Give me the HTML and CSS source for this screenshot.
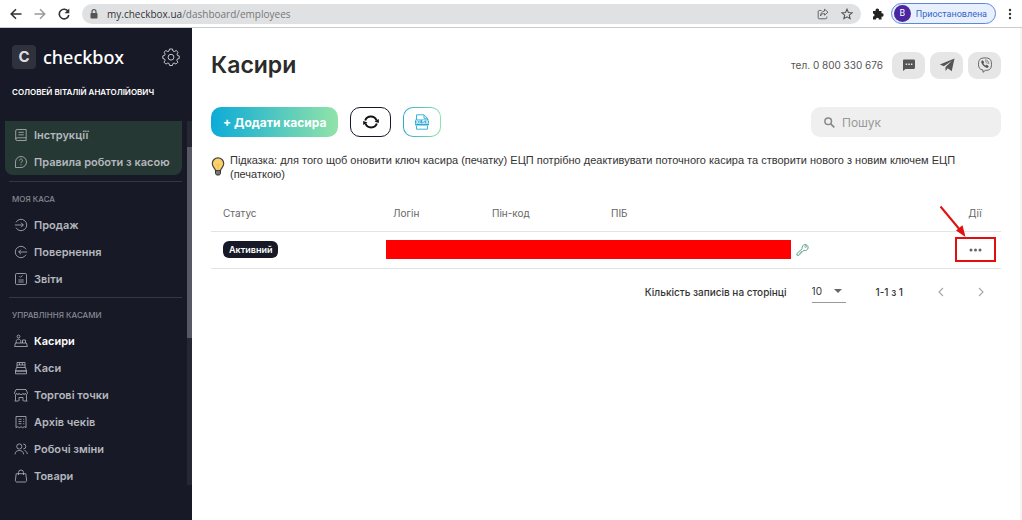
FILE: index.html
```html
<!DOCTYPE html>
<html lang="uk">
<head>
    <meta charset="UTF-8">
    <meta name="viewport" content="width=device-width, initial-scale=1.0">
    <title>Касири</title>
    <link rel="stylesheet" href="styles.css">
</head>
<body>

    <!-- Browser bar -->
    <header class="browser">
        <button class="nav-btn" aria-label="Back"><svg width="12" height="12" viewBox="0 0 12 12"><path d="M11.5 6H1.5M6 1.2L1.2 6 6 10.800" stroke="#333" stroke-width="1.6"/></svg></button>
        <button class="nav-btn" aria-label="Forward"><svg width="12" height="12" viewBox="0 0 12 12"><path d="M.5 6h10M6 1.200L10.800 6 6 10.800" stroke="#999" stroke-width="1.400"/></svg></button>
        <button class="nav-btn" aria-label="Reload"><svg width="12" height="12" viewBox="0 0 12 12"><path d="M10.200 3.600A4.800 4.800 0 1 0 10.800 7" stroke="#333" stroke-width="1.600"/><path d="M11.300.5v4.800H6.500z" fill="#333"/></svg></button>
        <div class="address">
            <svg width="8" height="10" viewBox="0 0 8 10"><rect x=".5" y="4" width="7" height="5.500" rx=".8" fill="#555"/><path d="M2 4V2.700a2 2 0 0 1 4 0V4" stroke="#555" stroke-width="1.200"/></svg>
            <span class="url"><b>my.checkbox.ua</b>/dashboard/employees</span>
            <svg width="12" height="12" viewBox="0 0 12 12"><path d="M4.500 2.500H2.200a1 1 0 0 0-1 1v6.300a1 1 0 0 0 1 1h6.600a1 1 0 0 0 1-1V8.500M7.500 1.200l3.500 3-3.500 3V5.500C5.500 5.500 4.300 6.300 3.500 8c.2-2.800 1.500-4.600 4-5z" stroke="#666"/></svg>
            <svg width="12" height="12" viewBox="0 0 12 12"><path d="M6 1.200l1.400 3.300 3.600.3-2.700 2.400.8 3.500L6 8.800l-3.100 1.900.8-3.500L1 4.800l3.600-.3z" stroke="#555" stroke-width="1.100"/></svg>
        </div>
        <svg class="puzzle" width="12" height="12" viewBox="0 0 12 12"><path d="M1 3h2.600a1.800 1.800 0 1 1 3.400 0H9.500v2.300a1.700 1.700 0 1 1 0 3.300V11.500H6.800a1.400 1.400 0 1 0-2.700 0H1V8.600a1.500 1.500 0 1 0 0-3z" fill="#222"/></svg>
        <button class="profile"><span class="avatar">В</span>Приостановлена</button>
        <button class="nav-btn" aria-label="Menu"><svg width="4" height="12" viewBox="0 0 4 12"><g fill="#333"><circle cx="2" cy="2" r="1.200"/><circle cx="2" cy="6" r="1.200"/><circle cx="2" cy="10" r="1.200"/></g></svg></button>
    </header>

    <div class="layout">
        <!-- Sidebar -->
        <aside class="sidebar">
            <div class="brand">
                <span class="brand-icon">C</span>
                <span class="brand-name">checkbox</span>
                <button class="settings" aria-label="Налаштування"><svg width="18" height="18" viewBox="0 0 18 18"><path d="M7.500 1h3l.5 2 1.300.6 1.900-1.100 1.900 1.900L15 6.200l.5 1.300 1.700.4v2.600l-1.800.5-.6 1.300 1.100 1.900-1.900 1.900-1.900-1.100-1.200.6-.5 1.900H7.600l-.5-1.900-1.300-.6-1.900 1.100L2 14.200l1.100-1.900L2.600 11 .8 10.500V7.900l1.800-.5.6-1.300L2 4.300l1.900-1.800 1.900 1.100L7 3z" stroke="#c4c6ca" stroke-linejoin="round"/><circle cx="9" cy="9.200" r="2.900" stroke="#c4c6ca"/></svg></button>
            </div>
            <div class="user-name">СОЛОВЕЙ ВІТАЛІЙ АНАТОЛІЙОВИЧ</div>

            <div class="menu-wrap">
                <nav class="menu">
                    <div class="help-box">
                        <a href="#"><svg width="14" height="14" viewBox="0 0 14 14"><path d="M3.200 1.500h9v11h-9a1.500 1.500 0 0 1-1.500-1.500V3a1.500 1.500 0 0 1 1.500-1.500zM1.700 11a1.400 1.400 0 0 1 1.500-1.200h9M4.500 4.300h5.300M4.500 6.800h5.300"/></svg>Інструкції</a>
                        <a href="#"><svg width="14" height="14" viewBox="0 0 14 14"><path d="M1.500 12.500V7A5.500 5.500 0 1 1 7 12.500zM5.500 5.500a1.500 1.500 0 1 1 2.300 1.300c-.6.400-.8.600-.8 1.300M7 9.300v1"/></svg>Правила роботи з касою</a>
                    </div>

                    <div class="menu-group">
                        <h2>МОЯ КАСА</h2>
                        <a href="#"><svg width="14" height="14" viewBox="0 0 14 14"><path d="M2 4.300a5.700 5.700 0 1 1 0 5.400M.8 7h8.500M7 4.700L9.300 7 7 9.300"/></svg>Продаж</a>
                        <a href="#"><svg width="14" height="14" viewBox="0 0 14 14"><path d="M12 4.300a5.700 5.700 0 1 0 0 5.400M13.200 7H4.700M7 4.700L4.700 7 7 9.300"/></svg>Повернення</a>
                        <a href="#"><svg width="14" height="14" viewBox="0 0 14 14"><rect x="1.500" y="1.500" width="11" height="11" rx="1.200"/><path d="M5.500 4.300l1 1L8.500 3.300M4.300 8h5.400M4.300 10h5.400"/></svg>Звіти</a>
                    </div>

                    <div class="menu-group">
                        <h2>УПРАВЛІННЯ КАСАМИ</h2>
                        <a href="#" class="active"><svg width="14" height="14" viewBox="0 0 14 14"><circle cx="4.500" cy="2.500" r="1.400"/><path d="M2.200 9V7.500C2.200 6 3 5.200 4.500 5.200S6.800 6 6.800 7.500V9M8.500 9V6h3v3M1.500 9h11l.9 3.500H.6z"/></svg>Касири</a>
                        <a href="#"><svg width="14" height="14" viewBox="0 0 14 14"><path d="M3 6.500v-5h8v5M3 4h8M5.600 1.500V4M8.300 1.500V4M2.500 6.500h9l1 3.500h-11zM1.500 10h11v2.800h-11z"/></svg>Каси</a>
                        <a href="#"><svg width="14" height="14" viewBox="0 0 14 14"><path d="M2 1.500h10L13.500 5c0 1.800-2.100 2-2.200.3C11 7 9 7 9 5.300 8.800 7 5.200 7 5 5.300 5 7 3 7 2.700 5.300 2.500 7 .5 6.800.5 5zM1.500 6.800v6M12.500 6.800v6M.5 13h4M9.500 13h4M5 13V9.500h4V13"/></svg>Торгові точки</a>
                        <a href="#"><svg width="14" height="14" viewBox="0 0 14 14"><path d="M2 1.500h10v11.200l-1.700-1-1.600 1-1.700-1-1.600 1-1.700-1-1.700 1zM4.500 4.300h3M4.500 6.500h3M4.500 8.700h3M9.200 4.300h1M9.200 6.500h1M9.200 8.700h1"/></svg>Архів чеків</a>
                        <a href="#"><svg width="14" height="14" viewBox="0 0 14 14"><circle cx="5.300" cy="4.500" r="2.600"/><path d="M1 12.300c.2-2.500 1.700-3.800 4.300-3.800s4.100 1.300 4.300 3.800M9.300 2a2.500 2.500 0 0 1 0 5M10.500 8.500c1.700.5 2.600 1.700 2.800 3.500"/></svg>Робочі зміни</a>
                        <a href="#"><svg width="14" height="14" viewBox="0 0 14 14"><path d="M2.200 4.700h9.600l.8 6.500c.1 1-.5 1.800-1.500 1.800H2.900c-1 0-1.600-.8-1.500-1.800zM4.500 6V3.500a2.500 2.500 0 0 1 5 0V6"/></svg>Товари</a>
                    </div>
                </nav>
                <div class="scrollbar"><div class="thumb"></div></div>
            </div>
        </aside>

        <!-- Page content -->
        <main class="content">
            <div class="page-head">
                <h1>Касири</h1>
                <span class="phone">тел. 0 800 330 676</span>
                <button class="contact" aria-label="Чат"><svg width="14" height="14" viewBox="0 0 14 14"><path d="M2.200 1.500h9.600c.7 0 1.200.5 1.200 1.200v7c0 .7-.5 1.200-1.200 1.200H3.500L1 13V2.700c0-.7.5-1.200 1.200-1.200z" fill="#555"/><path d="M3.700 6.300h1.500M6.300 6.300h1.500M8.900 6.300h1.500" stroke="#e6e6e6" stroke-width="1.400"/></svg></button>
                <button class="contact" aria-label="Telegram"><svg width="16" height="14" viewBox="0 0 16 14"><path d="M15.500.5L.8 6.600l4 1.600L13 2.700 6.500 9v4l2.300-2.700 3.900 2.900z" fill="#555"/></svg></button>
                <button class="contact" aria-label="Viber"><svg width="16" height="16" viewBox="0 0 16 16"><path d="M8 .9c4.800 0 6.500 1.700 6.500 6.300s-1.700 6.200-6.200 6.200L6 15.300v-2.200c-3.300-.6-4.500-2.300-4.500-5.900C1.500 2.600 3.200.9 8 .9z" stroke="#666"/><path d="M4.800 3.700l1-.5 1.400 2-.8 1.200c.4 1 1.100 1.700 2.200 2.200l1.100-.9 2.100 1.500-.6 1.300c-.6.600-1.600.4-3.100-.5C6 8.700 4.700 7 4.200 5.200c-.1-.6.100-1.100.6-1.500z" fill="#555"/><path d="M8 3c2.600.1 3.800 1.400 3.800 3.900M8.300 4.600c1.300.2 1.900.9 1.900 2.100" stroke="#666" stroke-width=".8"/></svg></button>
            </div>

            <div class="toolbar">
                <button class="add-btn">+ Додати касира</button>
                <button class="icon-btn" aria-label="Оновити"><svg width="16" height="16" viewBox="0 0 16 16"><path d="M2.200 6.500a6 6 0 0 1 11.300 0M13.800 9.500a6 6 0 0 1-11.300 0" stroke="#111" stroke-width="2"/><path d="M15.800 5v4L11.500 7.500zM.2 11V7l4.300 1.500z" fill="#111"/></svg></button>
                <button class="icon-btn export" aria-label="Експорт XLSX"><svg width="16" height="16" viewBox="0 0 16 16"><path d="M2.500 6V.8H10l3.500 3.500V6M10 .8v3.500h3.500M2.500 12v3.200h11V12" stroke="#3ab5d8"/><rect x="1" y="5.500" width="14" height="6" rx="1" fill="#2ba9d2"/><text x="8" y="10.200" class="xlsx">XLSX</text></svg></button>
                <label class="search">
                    <svg width="11" height="11" viewBox="0 0 11 11"><circle cx="4.200" cy="4.200" r="3.300" stroke="#888" stroke-width="1.500"/><path d="M6.800 6.800l3.500 3.500" stroke="#888" stroke-width="1.700"/></svg>
                    <input type="text" placeholder="Пошук" aria-label="Пошук">
                </label>
            </div>

            <div class="hint">
                <svg width="14" height="20" viewBox="0 0 14 20"><path d="M4.500 13.500C4.300 11.500 1.300 10 1.300 6.500a5.700 5.700 0 0 1 11.400 0c0 3.500-3 5-3.200 7z" fill="#fbd16c" stroke="#444" stroke-width="1.200"/><path d="M4.500 13.500h5v3L8.500 18h-3l-1-1.500z" fill="#777" stroke="#333"/><path d="M5 7l2 1.500L9 7M7 8.500v5" stroke="#e9b44a" stroke-width=".7"/></svg>
                <p>Підказка: для того щоб оновити ключ касира (печатку) ЕЦП потрібно деактивувати поточного касира та створити нового з новим ключем ЕЦП (печаткою)</p>
            </div>

            <table class="cashiers">
                <thead>
                    <tr>
                        <th class="col-status">Статус</th>
                        <th class="col-login">Логін</th>
                        <th class="col-pin">Пін-код</th>
                        <th>ПІБ</th>
                        <th class="col-actions">Дії</th>
                    </tr>
                </thead>
                <tbody>
                    <tr>
                        <td><span class="badge">Активний</span></td>
                        <td colspan="3" class="hidden-cell">
                            <div class="hidden-data">
                                <span class="redacted"></span>
                                <svg width="13" height="13" viewBox="0 0 13 13"><path d="M6.300 5.500a3 3 0 1 1 1.700 1.800L6.500 8.700H5.200V10H3.900v1.300l-.8.900H.9v-1.600z" stroke="#4c9a78" stroke-width=".9"/><circle cx="9.600" cy="3.500" r=".9" stroke="#4c9a78" stroke-width=".7"/></svg>
                            </div>
                        </td>
                        <td class="col-actions">
                            <div class="action-box">
                                <button class="dots" aria-label="Дії"><svg width="13" height="4" viewBox="0 0 13 4"><g fill="#666"><circle cx="2" cy="2" r="1.500"/><circle cx="6.500" cy="2" r="1.500"/><circle cx="11" cy="2" r="1.500"/></g></svg></button>
                                <svg class="arrow" width="28" height="34" viewBox="0 0 28 34"><path d="M1.500 1.500l20 24" stroke="#e01010" stroke-width="2"/><path d="M26.500 32l-9.500-6.500 6.500-5.300z" fill="#e01010"/></svg>
                            </div>
                        </td>
                    </tr>
                </tbody>
            </table>

            <div class="pagination">
                <label for="perPage">Кількість записів на сторінці</label>
                <div class="per-page">
                    <select id="perPage"><option>10</option><option>25</option><option>50</option></select>
                    <svg width="8" height="4" viewBox="0 0 8 4"><path d="M0 0h8L4 4z" fill="#666"/></svg>
                </div>
                <span class="range">1-1 з 1</span>
                <button class="page-btn" aria-label="Попередня"><svg width="6" height="10" viewBox="0 0 6 10"><path d="M5 1L1 5l4 4" stroke="#aaa" stroke-width="1.200"/></svg></button>
                <button class="page-btn" aria-label="Наступна"><svg width="6" height="10" viewBox="0 0 6 10"><path d="M1 1l4 4-4 4" stroke="#aaa" stroke-width="1.200"/></svg></button>
            </div>
        </main>
    </div>

</body>
</html>
```
FILE: styles.css
```css
/* General */
* {
    box-sizing: border-box;
}

body {
    display: flex;
    flex-direction: column;
    min-height: 100vh;
    margin: 0;
    font-family: Inter, "Noto Sans", sans-serif;
    font-size: 10px;
    color: #333;
    background: #fff;
}

svg {
    flex: none;
    fill: none;
}

button {
    display: flex;
    align-items: center;
    justify-content: center;
    padding: 0;
    border: none;
    background: none;
    font-family: inherit;
    cursor: pointer;
}

a {
    color: inherit;
    text-decoration: none;
}

/* Browser bar */
.browser {
    display: flex;
    align-items: center;
    height: 28px;
    padding: 0 10px;
    border-bottom: 1px solid #ccc;
}

.nav-btn {
    margin-right: 12px;
}

.browser .nav-btn:last-child {
    margin-right: 0;
}

.address {
    display: flex;
    flex: 1;
    align-items: center;
    gap: 12px;
    height: 20px;
    margin-right: 11px;
    padding: 0 8px;
    border-radius: 10px;
    background: #e0e1e3;
}

.url {
    flex: 1;
    margin-left: -3px;
    color: #777;
    font-family: "Open Sans", sans-serif;
    font-size: 10px;
}

.url b {
    font-weight: 400;
    color: #333;
}

.puzzle {
    margin-right: 7px;
}

.profile {
    gap: 5px;
    height: 21px;
    margin-right: 12px;
    padding: 0 8px 0 2px;
    border: 1px solid #5c87dc;
    border-radius: 11px;
    background: #e8f0fe;
    color: #3465c8;
    font-family: Roboto, sans-serif;
    font-size: 9px;
}

.avatar {
    width: 17px;
    border-radius: 50%;
    background: #4a26a0;
    color: #fff;
    font-size: 9px;
    line-height: 17px;
}

/* Sidebar */
.layout {
    display: flex;
    flex: 1;
}

.sidebar {
    flex: none;
    width: 192px;
    background: #171a26;
    color: #b4b7bd;
}

.brand {
    display: flex;
    align-items: center;
    gap: 7px;
    padding: 17px 12px 0;
}

.brand-icon {
    width: 24px;
    border-radius: 4px;
    background: #2f323d;
    color: #ddd;
    font-size: 15px;
    font-weight: 700;
    line-height: 24px;
    text-align: center;
}

.brand-name {
    font-family: "Noto Sans", sans-serif;
    font-size: 18px;
    font-weight: 500;
    line-height: 24px;
    color: #fff;
}

.settings {
    margin-left: auto;
}

.user-name {
    padding: 16px 12px 0;
    color: #fff;
    font-size: 8px;
    font-weight: 600;
    line-height: 14px;
    white-space: nowrap;
}

.menu-wrap {
    display: flex;
    margin-top: 22px;
}

.menu {
    flex: 1;
    padding: 0 5px;
}

.menu a {
    display: flex;
    align-items: center;
    gap: 6px;
    height: 27px;
    padding-left: 9px;
    font-size: 11px;
    font-weight: 600;
}

.menu a svg {
    stroke: #b4b7bd;
    stroke-width: .8;
}

.menu a.active {
    color: #fff;
}

.help-box {
    margin-bottom: 6px;
    border-radius: 0 0 8px 8px;
    background: #263834;
}

.menu-group {
    margin: 0 0 5px 4px;
    padding-top: 10px;
    border-top: 1px solid #343744;
}

.menu-group h2 {
    margin: 0 0 4px;
    padding-left: 3px;
    color: #858992;
    font-size: 8px;
    font-weight: 500;
    line-height: 15px;
}

.menu-group a {
    padding-left: 5px;
}

.scrollbar {
    width: 5px;
    height: 364px;
    padding-top: 26px;
    background: #252833;
}

.thumb {
    height: 191px;
    background: #565963;
}

/* Content */
.content {
    flex: 1;
    min-width: 0;
    padding: 23px 19px 20px;
    border-right: 2px solid #f5f5f5;
}

.page-head {
    display: flex;
    align-items: center;
    gap: 5px;
}

h1 {
    flex: 1;
    margin: 0;
    color: #2b2b2b;
    font-size: 23px;
    font-weight: 600;
    line-height: 28px;
}

.phone {
    margin-right: 4px;
    color: #555;
}

.contact {
    width: 33px;
    height: 27px;
    border-radius: 9px;
    background: #e6e6e7;
}

.toolbar {
    display: flex;
    gap: 12px;
    margin-top: 28px;
}

.add-btn {
    height: 30px;
    padding: 0 12px;
    border-radius: 10px;
    background: linear-gradient(to right, #0dabd8, #91e3a8);
    color: #fff;
    font-size: 12px;
    font-weight: 700;
}

.icon-btn {
    width: 41px;
    height: 30px;
    border: 1px solid #171a26;
    border-radius: 10px;
}

.export {
    width: 38px;
    border: 1px solid transparent;
    background: linear-gradient(#fff, #fff) padding-box, linear-gradient(to right, #2ba9d2, #91e3a8) border-box;
}

.xlsx {
    fill: #fff;
    font-size: 5px;
    font-weight: 700;
    text-anchor: middle;
}

.search {
    display: flex;
    align-items: center;
    gap: 7px;
    width: 190px;
    margin-left: auto;
    padding: 0 13px;
    border-radius: 9px;
    background: #efeff0;
}

.search input {
    width: 100%;
    padding: 0;
    border: none;
    outline: none;
    background: none;
    font-family: inherit;
    font-size: 12px;
}

.search input::placeholder {
    color: #999;
}

.hint {
    display: flex;
    align-items: center;
    gap: 5px;
    margin-top: 16px;
    color: #333;
    font-family: "Liberation Sans", sans-serif;
    font-size: 11px;
    line-height: 14px;
}

.hint p {
    margin: 0;
}

/* Table */
.cashiers {
    width: 100%;
    margin-top: 15px;
    border-collapse: collapse;
    table-layout: fixed;
}

.cashiers th,
.cashiers td {
    height: 37px;
    padding: 0 0 0 12px;
    border-bottom: 1px solid #e4e4e4;
    text-align: left;
}

.cashiers th {
    height: 35px;
    color: #666;
    font-weight: 400;
}

.col-status {
    width: 170px;
}

.col-login {
    width: 99px;
}

.col-pin {
    width: 119px;
}

.cashiers .col-actions {
    width: 52px;
    padding: 0;
    text-align: center;
}

.badge {
    display: inline-block;
    padding: 0 6px;
    border-radius: 6px;
    background: #171a26;
    color: #fff;
    font-size: 9px;
    font-weight: 600;
    line-height: 17px;
}

.cashiers .hidden-cell {
    padding-left: 5px;
}

.hidden-data {
    display: flex;
    align-items: center;
    gap: 5px;
}

.redacted {
    width: 72%;
    height: 19px;
    background: #f00;
}

.action-box {
    position: relative;
    width: 41px;
    height: 25px;
    margin: 0 auto;
    border: 2px solid #e01010;
}

.dots {
    width: 100%;
    height: 100%;
}

.arrow {
    position: absolute;
    right: 27px;
    bottom: 21px;
}

/* Pagination */
.pagination {
    display: flex;
    align-items: center;
    justify-content: flex-end;
    margin-top: 12px;
    padding-right: 10px;
    font-weight: 500;
}

.per-page {
    display: flex;
    align-items: center;
    width: 34px;
    height: 22px;
    margin: 0 30px 0 25px;
    padding-right: 4px;
    border-bottom: 1px solid #999;
}

.per-page select {
    flex: 1;
    min-width: 0;
    padding: 0;
    border: none;
    outline: none;
    background: none;
    appearance: none;
    color: #333;
    font-family: inherit;
    font-size: 10px;
}

.page-btn {
    width: 20px;
    height: 20px;
    margin-left: 28px;
}

.page-btn + .page-btn {
    margin-left: 20px;
}
```
